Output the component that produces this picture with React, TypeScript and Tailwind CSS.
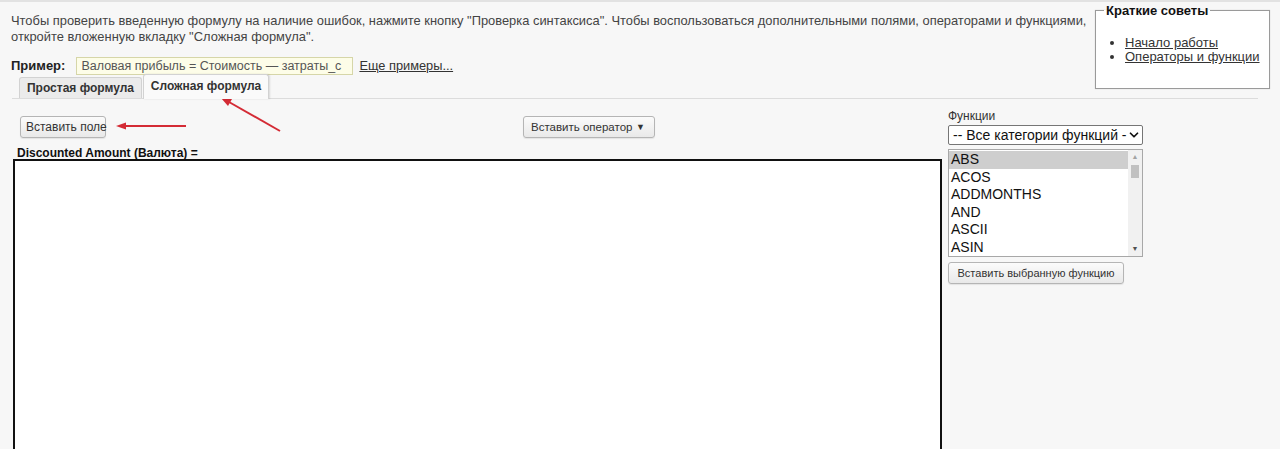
import { ChevronDown } from 'lucide-react';

const functions = ['ABS', 'ACOS', 'ADDMONTHS', 'AND', 'ASCII', 'ASIN'];

function Btn({ children, className = '' }: { children: React.ReactNode; className?: string }) {
  return (
    <button
      className={`h-[22px] whitespace-nowrap rounded-[3px] border border-[#b5b5b5] bg-gradient-to-b from-[#fbfbfb] to-[#e9e9e9] px-[5px] leading-[20px] text-[#333] shadow-[0_1px_1px_rgba(0,0,0,0.08)] ${className}`}
    >
      {children}
    </button>
  );
}

export default function App() {
  return (
    <div className="relative h-[449px] w-[1280px] overflow-hidden border-t-2 border-[#e2e2e2] bg-[#f7f7f7] font-['Liberation_Sans',Arial,sans-serif] text-[#333]">
      {/* header */}
      <div className="flex pl-[11px]">
        <div className="flex-1">
          <p className="mt-[11px] whitespace-nowrap text-[12.9px] leading-[16px] text-[#444]">
            Чтобы проверить введенную формулу на наличие ошибок, нажмите кнопку "Проверка синтаксиса". Чтобы воспользоваться дополнительными полями, операторами и функциями,
            <br />
            откройте вложенную вкладку "Сложная формула".
          </p>
          <div className="mt-[12px] flex h-[18px] items-center">
            <span className="text-[13px] font-bold text-[#222]">Пример:</span>
            <div className="ml-[11px] h-[18px] w-[277px] overflow-hidden whitespace-nowrap border border-[#d6d6a8] bg-[#fdfde8] px-[4px] text-[12.5px] leading-[16px] text-[#555]">
              Валовая прибыль = Стоимость — затраты_с
            </div>
            <a className="ml-[6px] text-[12.8px] text-[#333] underline">Еще примеры...</a>
          </div>
          <div className="ml-[8px] mt-[-1px] flex h-[24px] items-end">
            <div className="h-[21px] w-[123px] rounded-t-[3px] border border-b-0 border-[#d2d2d2] bg-[#ebebeb] text-center text-[12px] font-bold leading-[20px] text-[#333]">
              Простая формула
            </div>
            <div className="relative z-10 -mb-px ml-[1px] h-[25px] w-[126px] rounded-t-[3px] border border-b-0 border-[#d2d2d2] bg-[#fafafa] text-center text-[12px] font-bold leading-[22px] text-[#333] shadow-[1px_0_2px_rgba(0,0,0,0.12)]">
              Сложная формула
            </div>
          </div>
        </div>
        <fieldset className="mr-[10px] mt-[1px] h-[86px] w-[175px] self-start border border-[#9a9a9a] bg-white px-[8px] shadow-[0_0_1px_rgba(0,0,0,0.2)]">
          <legend className="px-[2px] text-[13px] font-bold leading-[15px] text-[#111]">Краткие советы</legend>
          <ul className="mt-[18px] list-disc pl-[21px] text-[13px] leading-[14px] text-[#333] marker:text-[#333]">
            <li>
              <a className="underline">Начало работы</a>
            </li>
            <li>
              <a className="underline">Операторы и функции</a>
            </li>
          </ul>
        </fieldset>
      </div>
      <div className="ml-[12px] mr-[22px] h-px bg-[#dcdcdc]" />

      {/* body */}
      <div className="flex">
        <div className="ml-[13px] w-[929px]">
          <div className="mt-[17px] flex">
            <Btn className="ml-[7px] w-[86px] text-[12px]">Вставить поле</Btn>
            <Btn className="ml-[417px] flex w-[132px] items-center justify-between pl-[7px] pr-[9px] text-[11.5px]">
              <span>Вставить оператор</span>
              <span className="text-[9px]">▼</span>
            </Btn>
          </div>
          <div className="ml-[4px] mt-[9px] text-[12px] font-bold leading-[13px] text-[#111]">Discounted Amount (Валюта) =</div>
          <div className="-mt-px h-[300px] border-2 border-[#111] bg-white" />
        </div>
        <div className="ml-[6px] w-[195px]">
          <div className="mt-[10px] text-[12px] leading-[14px] text-[#333]">Функции</div>
          <div className="mt-[2px] flex h-[20px] items-center justify-between overflow-hidden rounded-[2px] border border-[#767676] bg-white pl-[4px] pr-[2px] text-[14px] text-[#111]">
            <span className="whitespace-nowrap">-- Все категории функций -</span>
            <ChevronDown size={14} strokeWidth={3} className="shrink-0 bg-white" />
          </div>
          <div className="mt-[4px] flex h-[108px] overflow-hidden border border-[#a8a8a8] bg-white">
            <div className="flex-1 pt-[1px] text-[14px] leading-[17.6px] text-[#111]">
              {functions.map((f, i) => (
                <div key={f} className={`pl-[2px] ${i === 0 ? 'bg-[#cecece]' : ''}`}>
                  {f}
                </div>
              ))}
            </div>
            <div className="flex w-[14px] flex-col items-center bg-[#f1f1f1]">
              <span className="mt-[2px] text-[7px] leading-[10px] text-[#a3a3a3]">▲</span>
              <div className="mt-[3px] h-[13px] w-[8px] bg-[#c1c1c1]" />
              <span className="mt-auto mb-[2px] text-[7px] leading-[10px] text-[#505050]">▼</span>
            </div>
          </div>
          <Btn className="mt-[5px] w-[176px] px-[3px] text-[11px]">Вставить выбранную функцию</Btn>
        </div>
      </div>

      {/* annotation arrows */}
      <svg className="pointer-events-none absolute left-0 top-0" width="1280" height="449">
        <g stroke="#d42b35" strokeWidth="2" fill="#d42b35">
          <line x1="186" y1="124" x2="124" y2="124" />
          <polygon points="116,124 126,120.5 126,127.5" stroke="none" />
          <line x1="280" y1="129" x2="229" y2="100" />
          <polygon points="221,96 232,97 228,104" stroke="none" />
        </g>
      </svg>
    </div>
  );
}
